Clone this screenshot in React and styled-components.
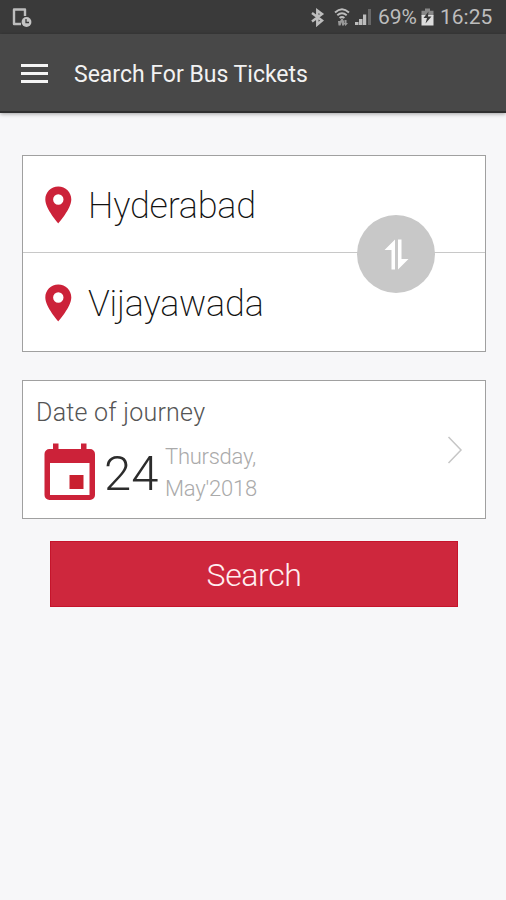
import React from "react";
import styled, { createGlobalStyle } from "styled-components";

const GlobalStyle = createGlobalStyle`
  * {
    box-sizing: border-box;
  }
  body {
    margin: 0;
    background: #f7f7f9;
    font-family: Roboto, "Liberation Sans", sans-serif;
  }
`;

const Screen = styled.div`
  width: 506px;
  height: 900px;
  background: #f7f7f9;
  overflow: hidden;
`;

const StatusBar = styled.div`
  height: 34px;
  padding: 0 13px 0 11px;
  background: #3a3a3a;
  display: flex;
  align-items: center;
  justify-content: space-between;
`;

const StatusRight = styled.div`
  display: flex;
  align-items: center;
`;

const StatusText = styled.span`
  width: ${(props) => props.$width}px;
  color: #bdbdbd;
  font-size: 21px;
  line-height: 34px;
  white-space: nowrap;
`;

const Icon = styled.svg`
  display: block;
  flex: none;
  margin-right: ${(props) => props.$gap || 0}px;
`;

const Toolbar = styled.header`
  height: 79px;
  padding-left: 21px;
  background: #484848;
  border-bottom: 2px solid #303030;
  box-shadow: 0 1px 4px rgba(0, 0, 0, 0.35);
  display: flex;
  align-items: center;
`;

const MenuButton = styled.div`
  width: 27px;
  display: flex;
  flex-direction: column;
  gap: 5px;
  margin: 1px 26px 0 0;
`;

const MenuLine = styled.span`
  height: 3px;
  background: #f5f5f5;
`;

const Title = styled.h1`
  margin: 4px 0 0;
  color: #f2f2f2;
  font-size: 23px;
  font-weight: 400;
  line-height: 30px;
`;

const Content = styled.main`
  padding: 42px 20px 0 22px;
`;

const Card = styled.section`
  position: relative;
  height: ${(props) => props.$height}px;
  margin-bottom: ${(props) => props.$gap}px;
  background: #fff;
  border: 1px solid #a0a0a0;
`;

const CityRow = styled.div`
  height: ${(props) => props.$height}px;
  padding: 1px 0 0 21px;
  display: flex;
  align-items: center;
  border-bottom: ${(props) => (props.$divider ? "1px solid #c8c8c8" : "none")};
`;

const City = styled.span`
  color: #111;
  font-size: 36px;
  font-weight: 200;
  line-height: 44px;
  letter-spacing: -0.2px;
  margin-top: 3px;
`;

const SwapButton = styled.div`
  position: absolute;
  top: 59px;
  right: 50px;
  width: 78px;
  height: 78px;
  border-radius: 50%;
  background: #c8c8c8;
  display: flex;
  align-items: center;
  justify-content: center;
`;

const DateCard = styled(Card)`
  display: flex;
  align-items: center;
  justify-content: space-between;
  padding: 0 22px 0 13px;
`;

const DateLabel = styled.div`
  color: #555;
  font-size: 25px;
  font-weight: 300;
  line-height: 30px;
  letter-spacing: 0.25px;
  margin-top: 4px;
`;

const DateRow = styled.div`
  display: flex;
  align-items: center;
  margin-top: 11px;
  padding-left: 8px;
`;

const Day = styled.span`
  width: 61px;
  color: #2c2c2c;
  font-size: 49px;
  font-weight: 300;
  line-height: 58px;
  margin-top: 3px;
`;

const Weekday = styled.div`
  color: #aaa;
  font-size: 22px;
  font-weight: 300;
  line-height: 32px;
  letter-spacing: -0.25px;
  margin-top: 2px;
`;

const SearchButton = styled.div`
  width: 408px;
  height: 66px;
  margin-left: 28px;
  background: #ce273d;
  border: 1px solid #c5142b;
  color: #ffeef0;
  font-size: 32px;
  font-weight: 300;
  line-height: 67px;
  letter-spacing: -0.4px;
  text-align: center;
`;

function Pin() {
  return (
    <Icon width="28" height="38" viewBox="0 0 28 38" $gap={16}>
      <path
        fill="#cc2239"
        fillRule="evenodd"
        d="M14.300 0.500C6.900 0.500 1.300 6.200 1.300 13.500C1.300 22.800 14.300 37.500 14.300 37.500S27.300 22.800 27.300 13.500C27.300 6.200 21.700 0.500 14.300 0.500ZM14.300 8.300a5.200 5.200 0 1 1 0 10.400a5.200 5.200 0 0 1 0-10.400Z"
      />
    </Icon>
  );
}

function DeviceClock() {
  return (
    <Icon width="22" height="22" viewBox="0 0 22 22">
      <path d="M10 18H3V3.500H14V10" fill="none" stroke="#bdbdbd" strokeWidth="2.400" strokeLinejoin="round" />
      <circle cx="15.500" cy="16" r="4.900" fill="#c4c4c4" />
      <path d="M15 13V16.500H18" fill="none" stroke="#3a3a3a" strokeWidth="1.300" />
    </Icon>
  );
}

function StatusIcons() {
  return (
    <Icon width="62" height="20" viewBox="0 0 62 20" $gap={6}>
      <path d="M2 6L12 13.500L7.300 17.500V3.500L12 7L2 14.500" fill="none" stroke="#bdbdbd" strokeWidth="2.500" />
      <g fill="none" stroke="#bdbdbd" strokeWidth="1.900">
        <path d="M25 5.500Q32 -1 39 5.500" />
        <path d="M27.300 8.300Q32 4 36.700 8.300" />
        <path d="M29.600 11Q32 9 34.400 11" />
      </g>
      <path d="M28 14h2l2-3l2 3v4.500h-2V15l-1.500 3.500h-2zM34.500 13h2v3h1.500l-2.500 3l-2-3h1z" fill="#999" />
      <path d="M45 15h3.500v3h-3.500zM49 12h3.500v6h-3.500zM53 7.500h3.200v10.500h-3.200z" fill="#bdbdbd" />
      <path d="M58 2h3v16h-3z" fill="#686868" />
    </Icon>
  );
}

function Battery() {
  return (
    <Icon width="13" height="18" viewBox="0 0 13 18" $gap={6}>
      <path d="M4 0.500h5v2.200h3.500v5H0.500v-5H4z" fill="#888" />
      <path d="M0.500 7h12v10.500h-12z" fill="#dedede" />
      <path d="M7.500 3.500L2.500 10h3.500L4.500 15.500L10.500 8.500H7z" fill="#3a3a3a" />
    </Icon>
  );
}

function App() {
  return (
    <Screen>
      <GlobalStyle />
      <StatusBar>
        <DeviceClock />
        <StatusRight>
          <StatusIcons />
          <StatusText $width={43}>69%</StatusText>
          <Battery />
          <StatusText $width={53}>16:25</StatusText>
        </StatusRight>
      </StatusBar>
      <Toolbar>
        <MenuButton>
          <MenuLine />
          <MenuLine />
          <MenuLine />
        </MenuButton>
        <Title>Search For Bus Tickets</Title>
      </Toolbar>
      <Content>
        <Card $height={197} $gap={28}>
          <CityRow $height={97} $divider>
            <Pin />
            <City>Hyderabad</City>
          </CityRow>
          <CityRow $height={98}>
            <Pin />
            <City>Vijayawada</City>
          </CityRow>
          <SwapButton>
            <Icon width="26" height="32" viewBox="0 0 26 32" fill="#fff">
              <path d="M12 1.500V31.500H8.500V12H1.500Z" />
              <path d="M15 31.500V1.500H18.500V21H25.500Z" />
            </Icon>
          </SwapButton>
        </Card>
        <DateCard $height={139} $gap={22}>
          <div>
            <DateLabel>Date of journey</DateLabel>
            <DateRow>
              <Icon width="52" height="58" viewBox="0 0 52 58" $gap={8}>
                <path
                  fill="#cc2239"
                  fillRule="evenodd"
                  d="M9 0.500h5.500V6H37V0.500h5.500V6H46a5 5 0 0 1 5 5V52a5 5 0 0 1-5 5H5.500a5 5 0 0 1-5-5V11a5 5 0 0 1 5-5H9ZM6 20V52H45.500V20Z"
                />
                <path d="M25.500 32h14v14h-14z" fill="#c9202f" />
              </Icon>
              <Day>24</Day>
              <Weekday>
                Thursday,
                <br />
                May'2018
              </Weekday>
            </DateRow>
          </div>
          <Icon width="16" height="28" viewBox="0 0 16 28">
            <path d="M1.500 1L14 14L1.500 27" fill="none" stroke="#c6c6c6" strokeWidth="1.500" />
          </Icon>
        </DateCard>
        <SearchButton>Search</SearchButton>
      </Content>
    </Screen>
  );
}

export default App;
